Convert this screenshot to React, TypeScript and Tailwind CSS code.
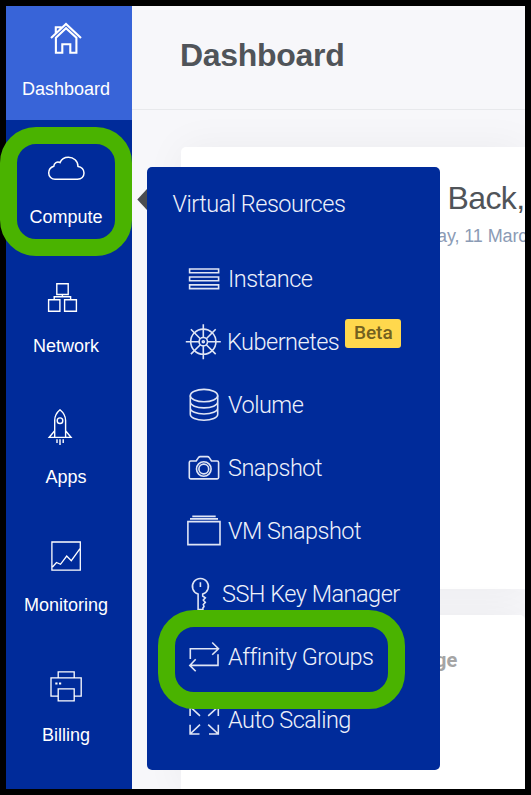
import type { ReactNode } from "react";

type NavItem = { label: string; spacing: string; width: number; icon: ReactNode };

const navItems: NavItem[] = [
  {
    label: "Compute",
    spacing: "mt-[27px]",
    width: 1.5,
    icon: (
      <path d="M9 32.2H31.5C35.5 32.2 38 29.4 38 26C38 22.5 35.5 19.6 32 19.4C32 13.8 27.5 10.2 22.4 10.2C18.4 10.2 15.4 12.2 14 15.6C11.2 14.2 8 16 7.8 19.2C4.5 20.2 2.7 22.8 2.7 26C2.7 29.6 5.6 32.2 9 32.2Z" />
    ),
  },
  {
    label: "Network",
    spacing: "mt-[47px]",
    width: 1.4,
    icon: <path d="M10.8 7.8H22.2V18.5H10.8ZM2.6 23.8H13.9V35.2H2.6ZM18.6 23.8H30.4V35.2H18.6ZM16.4 18.5V20.8M8.2 23.8V20.8H24.6V23.8" />,
  },
  {
    label: "Apps",
    spacing: "mt-[49px]",
    width: 1.4,
    icon: (
      <>
        <path d="M8.7 30.4V13.5C8.7 9 11 5.3 14 2.8C17 5.3 19.6 9 19.6 13.5V30.4M8.7 23.8L3.2 30.4H25L19.6 23.8M11 32.3V36M14 32.3V38M17.2 32.3V36" />
        <circle cx="14" cy="13.7" r="2.8" />
      </>
    ),
  },
  {
    label: "Monitoring",
    spacing: "mt-[46px]",
    width: 1.3,
    icon: <path d="M5.9 7H34.3V35.1H5.9ZM6.5 32L10.5 27.5L14.5 29.3L20.7 21L25.3 25.7L34 13.7" />,
  },
  {
    label: "Billing",
    spacing: "mt-[48px]",
    width: 1.3,
    icon: (
      <>
        <path d="M12.2 12.9V6.9H28.2V12.9M12.2 31.1H5V12.9H35.2V31.1H28.2M12.2 23.8H28.2V35.8H12.2Z" />
        <path d="M9.3 18.4H11.5M13 18.4H15.2" strokeWidth="2" />
      </>
    ),
  },
];

type Resource = { label: string; text: string; icon: ReactNode; beta?: boolean };

const resources: Resource[] = [
  {
    label: "Instance",
    text: "ml-1",
    icon: <path d="M5.6 22H34.6V25.7H5.6ZM5.6 30H34.6V33.7H5.6ZM5.6 37.9H34.6V41.6H5.6Z" />,
  },
  {
    label: "Kubernetes",
    text: "ml-[3px]",
    beta: true,
    icon: (
      <>
        <circle cx="19.3" cy="31.7" r="12.6" />
        <circle cx="19.3" cy="31.7" r="4.2" />
        <circle cx="19.3" cy="31.7" r="1" />
        <path d="M19.3 14.2V27.5M19.3 35.9V49.2M1.8 31.7H15.1M23.5 31.7H36.8M6.9 19.3L16.3 28.7M22.3 34.7L31.7 44.1M31.7 19.3L22.3 28.7M16.3 34.7L6.9 44.1" />
      </>
    ),
  },
  {
    label: "Volume",
    text: "ml-1",
    icon: (
      <>
        <ellipse cx="20" cy="22.6" rx="13.7" ry="6.2" />
        <path d="M6.3 22.6V41.3C6.3 44.8 12.4 47.2 20 47.2S33.7 44.8 33.7 41.3V22.6M6.3 28.8C6.3 32.3 12.4 34.9 20 34.9S33.7 32.3 33.7 28.8M6.3 35C6.3 38.5 12.4 41 20 41S33.7 38.5 33.7 35" />
      </>
    ),
  },
  {
    label: "Snapshot",
    text: "ml-1",
    icon: (
      <>
        <path d="M6.7 25H12.2L14.6 21.4Q15.2 20.6 16.2 20.6H23.5Q24.5 20.6 25.1 21.4L27.5 25H33.2Q34.6 25 34.6 26.4V41.6Q34.6 42.9 33.2 42.9H6.7Q5.3 42.9 5.3 41.6V26.4Q5.3 25 6.7 25Z" />
        <circle cx="19.8" cy="33" r="7.3" />
        <circle cx="19.8" cy="33" r="4.9" />
      </>
    ),
  },
  {
    label: "VM Snapshot",
    text: "ml-1",
    icon: <path d="M3.9 22.6H36V45.6H3.9ZM8.3 17.4H31.7M6 19.9H34" />,
  },
  {
    label: "SSH Key Manager",
    text: "-ml-[2px]",
    icon: (
      <path d="M14.1 47.5V32.1A8 8 0 1 1 18.7 32.1V34L21.3 35.8L19.3 38L21.3 40.5L19.3 42.5L20 44.5L18.9 46V47.5ZM16.4 20.2V25" />
    ),
  },
  {
    label: "Affinity Groups",
    text: "ml-1",
    icon: <path d="M6.3 34V23.7H34.3M28.2 17.5L34.5 23.7L28.2 29.8M34 29.3V40.4H6.3M11.7 34.3L5.8 40.4L11.7 46.3" />,
  },
  {
    label: "Auto Scaling",
    text: "ml-1",
    icon: (
      <path d="M6.1 28V18.6H15.5M6.1 18.6L16 27.8M25 18.6H34.3V28M34.3 18.6L24.2 27.8M6.1 36.7V46H15.5M6.1 46L16 36.6M25 46H34.3V36.7M34.3 46L24.2 36.6" />
    ),
  },
];

function Glyph({ children, width }: { children: ReactNode; width: number }) {
  return (
    <svg className="h-10 w-10 overflow-visible" viewBox="0 0 40 40" fill="none" stroke="white" strokeWidth={width}>
      {children}
    </svg>
  );
}

function Sidebar() {
  return (
    <nav className="flex w-[126px] shrink-0 flex-col bg-[#002b9a] text-lg leading-6 text-white">
      <div className="flex h-[114px] flex-col items-center gap-[18px] bg-[#3864d8] pt-[13px] pr-[6px]">
        <Glyph width={2.1}>
          <path d="M5 19L20 5L35 19M9.8 14.3V8.3H14.5V10.2" />
          <path d="M9.9 18.8L20 9.3L30.4 18.8V33.7H24.3V25.3H16.3V33.7H9.9Z" />
        </Glyph>
        <span>Dashboard</span>
      </div>
      {navItems.map((item) => (
        <div key={item.label} className={`flex flex-col items-center gap-[18px] pr-[6px] ${item.spacing}`}>
          <Glyph width={item.width}>{item.icon}</Glyph>
          <span>{item.label}</span>
        </div>
      ))}
    </nav>
  );
}

function ResourceMenu() {
  return (
    <div className="absolute top-[167px] left-[147px] h-[603px] w-[293px] rounded-[5px] bg-[#002b9a] font-[Roboto,sans-serif] text-[23.5px] font-light tracking-[-0.5px] text-[#eef1fa]">
      <h2 className="flex h-20 items-center pb-[5px] pl-[25.5px]">Virtual Resources</h2>
      <ul>
        {resources.map((item) => (
          <li key={item.label} className="flex h-[63px] items-center pl-[37px] whitespace-nowrap">
            <svg className="h-[63px] w-10 shrink-0" viewBox="0 0 40 63" fill="none" stroke="#dfe5f5" strokeWidth="1.6">
              {item.icon}
            </svg>
            <span className={`pt-[2px] ${item.text}`}>{item.label}</span>
            {item.beta && (
              <span className="mb-[17px] ml-[6px] flex h-[29px] w-14 items-center justify-center rounded-[3px] bg-[#ffd84d] text-[19px] font-medium tracking-normal text-[#73611f]">
                Beta
              </span>
            )}
          </li>
        ))}
      </ul>
    </div>
  );
}

export default function App() {
  return (
    <div className="relative h-[795px] w-[531px] overflow-hidden bg-black p-[6px] font-['Liberation_Sans',Arial,sans-serif]">
      <div className="flex h-[783px] w-[519px] overflow-hidden bg-[#f7f7fa]">
        <Sidebar />
        <main className="flex min-w-0 flex-1 flex-col">
          <header className="flex h-[104px] shrink-0 items-center border-b border-[#e8e9ec] pb-[6px] pl-12">
            <h1 className="text-[32px] leading-10 font-bold tracking-[-0.3px] text-[#505459]">Dashboard</h1>
          </header>
          <div className="flex flex-1 flex-col gap-[26px] overflow-hidden pt-[37px] pl-[49px]">
            <section className="h-[442px] shrink-0 rounded-tl-[5px] bg-white pt-[31px] shadow-[0_0_40px_rgba(0,0,0,0.05)]">
              <p className="pl-[266.5px] text-[32px] leading-10 tracking-[-0.6px] whitespace-nowrap text-[#505459]">Back,</p>
              <p className="pt-[6px] pl-[256px] text-lg leading-6 tracking-[-0.1px] whitespace-nowrap text-[#8b9bb5]">ay, 11 Marc</p>
            </section>
            <section className="flex-1 rounded-t-[5px] bg-white pt-[33px] pl-[254px] shadow-[0_0_40px_rgba(0,0,0,0.05)]">
              <p className="font-[Roboto,sans-serif] text-[20px] leading-6 font-bold text-[#a5a5a5]">ge</p>
            </section>
          </div>
        </main>
      </div>
      <svg className="absolute top-[189px] left-[137px] h-[21px] w-[10px]" viewBox="0 0 10 21">
        <path d="M10 0V21L0.3 10.5Z" fill="#4a4c50" />
      </svg>
      <ResourceMenu />
      <div className="absolute top-[127px] left-0 h-[129px] w-[132px] rounded-[36px] border-[17px] border-[#4ab300]" />
      <div className="absolute top-[610px] left-[158px] h-[99px] w-[247px] rounded-[36px] border-[17px] border-[#4ab300]" />
    </div>
  );
}
